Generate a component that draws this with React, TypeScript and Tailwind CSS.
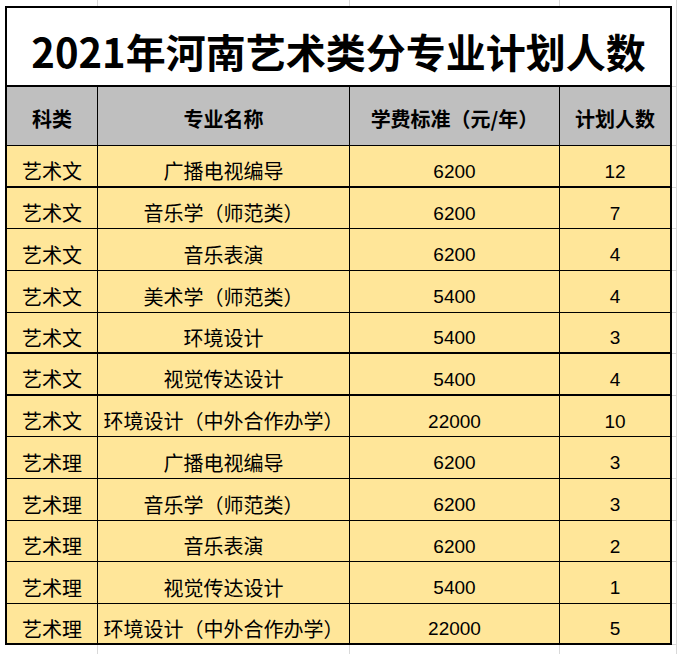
const rows = [
  { cat: "艺术文", name: "广播电视编导", fee: "6200", num: "12", h: "h-[42px]", thick: true },
  { cat: "艺术文", name: "音乐学（师范类）", fee: "6200", num: "7", h: "h-[41px]" },
  { cat: "艺术文", name: "音乐表演", fee: "6200", num: "4", h: "h-[42px]" },
  { cat: "艺术文", name: "美术学（师范类）", fee: "5400", num: "4", h: "h-[42px]" },
  { cat: "艺术文", name: "环境设计", fee: "5400", num: "3", h: "h-[41px]", thick: true },
  { cat: "艺术文", name: "视觉传达设计", fee: "5400", num: "4", h: "h-[42px]", thick: true },
  { cat: "艺术文", name: "环境设计（中外合作办学）", fee: "22000", num: "10", h: "h-[41px]" },
  { cat: "艺术理", name: "广播电视编导", fee: "6200", num: "3", h: "h-[42px]" },
  { cat: "艺术理", name: "音乐学（师范类）", fee: "6200", num: "3", h: "h-[42px]" },
  { cat: "艺术理", name: "音乐表演", fee: "6200", num: "2", h: "h-[41px]" },
  { cat: "艺术理", name: "视觉传达设计", fee: "5400", num: "1", h: "h-[42px]" },
  { cat: "艺术理", name: "环境设计（中外合作办学）", fee: "22000", num: "5", h: "h-[41px]", last: true },
];

const cjk = "font-['Microsoft_YaHei','Noto_Sans_CJK_SC',sans-serif]";
const num = "font-['Liberation_Sans','Noto_Sans_CJK_SC',sans-serif]";

// faint spreadsheet gridlines outside the table
function GridStrip({ h }: { h: string }) {
  return (
    <div className={`flex ${h}`}>
      <div className="w-[5px]" />
      <div className="w-[93px] border-r border-[#d9d9d9]" />
      <div className="w-[252px] border-r border-[#d9d9d9]" />
      <div className="w-[210px] border-r border-[#d9d9d9]" />
      <div className="w-[112px]" />
      <div className="w-[5px] border-r border-[#d9d9d9]" />
    </div>
  );
}

export default function App() {
  return (
    <div className={`w-[682px] h-[654px] bg-white overflow-hidden text-black ${cjk}`}>
      <GridStrip h="h-[6px]" />

      {/* Title */}
      <div className="flex h-[81px]">
        <div className="w-[5px]" />
        <div className="w-[667px] border-2 border-black bg-white flex items-center justify-center pt-[8px]">
          <span className="text-[40px] font-bold leading-none">2021年河南艺术类分专业计划人数</span>
        </div>
        <div className="w-[5px] border-r border-b border-[#d9d9d9]" />
      </div>

      {/* Header */}
      <div className="flex h-[59px]">
        <div className="w-[5px]" />
        <div className="w-[93px] border-l-2 border-r border-b border-black bg-[#bfbfbf] flex items-center justify-center pt-[6px] text-[20px] font-bold">
          科类
        </div>
        <div className="w-[252px] border-r border-b border-black bg-[#bfbfbf] flex items-center justify-center pt-[6px] text-[20px] font-bold">
          专业名称
        </div>
        <div className="w-[210px] border-r border-b border-black bg-[#bfbfbf] flex items-center justify-center pt-[6px] text-[20px] font-bold">
          学费标准（元/年）
        </div>
        <div className="w-[112px] border-r-2 border-b border-black bg-[#bfbfbf] flex items-center justify-center pt-[6px] text-[20px] font-bold">
          计划人数
        </div>
        <div className="w-[5px] border-r border-b border-[#d9d9d9]" />
      </div>

      {rows.map((r, i) => {
        const bb = r.last || r.thick ? "border-b-2" : "border-b";
        return (
          <div key={i} className={`flex ${r.h}`}>
            <div className="w-[5px]" />
            <div className={`w-[93px] border-l-2 border-r ${bb} border-black bg-[#ffe699] flex items-center justify-center pt-[10px] text-[20px] leading-none`}>
              {r.cat}
            </div>
            <div className={`w-[252px] border-r ${bb} border-black bg-[#ffe699] flex items-center justify-center pt-[10px] text-[20px] leading-none whitespace-nowrap`}>
              {r.name}
            </div>
            <div className={`w-[210px] border-r ${bb} border-black bg-[#ffe699] flex items-center justify-center pt-[10px] text-[19px] leading-none ${num}`}>
              {r.fee}
            </div>
            <div className={`w-[112px] border-r-2 ${bb} border-black bg-[#ffe699] flex items-center justify-center pt-[10px] text-[19px] leading-none ${num}`}>
              {r.num}
            </div>
            <div className="w-[5px] border-r border-b border-[#d9d9d9]" />
          </div>
        );
      })}

      <GridStrip h="h-[9px]" />
    </div>
  );
}
